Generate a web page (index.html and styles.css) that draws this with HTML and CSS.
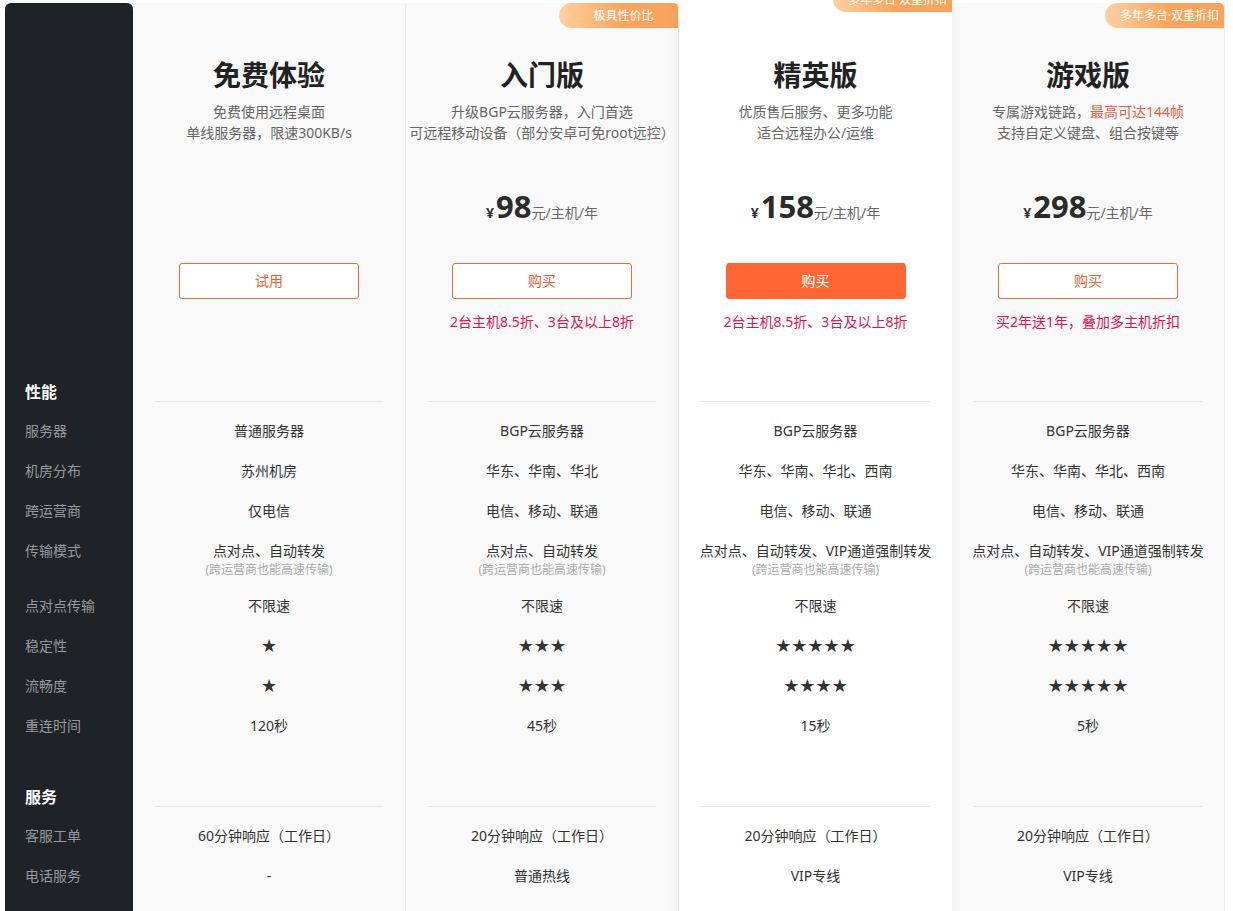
FILE: index.html
```html
<!DOCTYPE html>
<html lang="zh-CN">
<head>
    <meta charset="UTF-8">
    <meta name="viewport" content="width=device-width, initial-scale=1.0">
    <title>远程桌面套餐对比</title>
    <link rel="stylesheet" href="styles.css">
</head>
<body>

<div class="page">
    <!-- left label column -->
    <aside class="side">
        <div class="head"></div>
        <div class="sec">性能</div>
        <ul class="rows">
            <li>服务器</li>
            <li>机房分布</li>
            <li>跨运营商</li>
            <li class="tall">传输模式</li>
            <li>点对点传输</li>
            <li>稳定性</li>
            <li>流畅度</li>
            <li>重连时间</li>
        </ul>
        <div class="sec gap">服务</div>
        <ul class="rows service">
            <li>客服工单</li>
            <li>电话服务</li>
        </ul>
    </aside>

    <div class="plan">
        <div class="head">
            <h2 class="title">免费体验</h2>
            <p class="desc">免费使用远程桌面<br>单线服务器，限速300KB/s</p>
            <div class="price"></div>
            <a class="btn" href="#">试用</a>
        </div>
        <div class="sec"></div>
        <ul class="rows">
            <li>普通服务器</li>
            <li>苏州机房</li>
            <li>仅电信</li>
            <li class="tall">点对点、自动转发<small>(跨运营商也能高速传输)</small></li>
            <li>不限速</li>
            <li class="stars">★</li>
            <li class="stars">★</li>
            <li>120秒</li>
        </ul>
        <div class="sec gap"></div>
        <ul class="rows service">
            <li>60分钟响应（工作日）</li>
            <li>-</li>
        </ul>
    </div>

    <div class="plan">
        <div class="head">
            <span class="badge">极具性价比</span>
            <h2 class="title">入门版</h2>
            <p class="desc">升级BGP云服务器，入门首选<br>可远程移动设备（部分安卓可免root远控）</p>
            <div class="price"><span class="cur">¥</span><b>98</b>元/主机/年</div>
            <a class="btn" href="#">购买</a>
            <p class="note">2台主机8.5折、3台及以上8折</p>
        </div>
        <div class="sec"></div>
        <ul class="rows">
            <li>BGP云服务器</li>
            <li>华东、华南、华北</li>
            <li>电信、移动、联通</li>
            <li class="tall">点对点、自动转发<small>(跨运营商也能高速传输)</small></li>
            <li>不限速</li>
            <li class="stars">★★★</li>
            <li class="stars">★★★</li>
            <li>45秒</li>
        </ul>
        <div class="sec gap"></div>
        <ul class="rows service">
            <li>20分钟响应（工作日）</li>
            <li>普通热线</li>
        </ul>
    </div>

    <div class="plan featured">
        <div class="head">
            <span class="badge">多年多台·双重折扣</span>
            <h2 class="title">精英版</h2>
            <p class="desc">优质售后服务、更多功能<br>适合远程办公/运维</p>
            <div class="price"><span class="cur">¥</span><b>158</b>元/主机/年</div>
            <a class="btn solid" href="#">购买</a>
            <p class="note">2台主机8.5折、3台及以上8折</p>
        </div>
        <div class="sec"></div>
        <ul class="rows">
            <li>BGP云服务器</li>
            <li>华东、华南、华北、西南</li>
            <li>电信、移动、联通</li>
            <li class="tall">点对点、自动转发、VIP通道强制转发<small>(跨运营商也能高速传输)</small></li>
            <li>不限速</li>
            <li class="stars">★★★★★</li>
            <li class="stars">★★★★</li>
            <li>15秒</li>
        </ul>
        <div class="sec gap"></div>
        <ul class="rows service">
            <li>20分钟响应（工作日）</li>
            <li>VIP专线</li>
        </ul>
    </div>

    <div class="plan">
        <div class="head">
            <span class="badge">多年多台·双重折扣</span>
            <h2 class="title">游戏版</h2>
            <p class="desc">专属游戏链路，<em>最高可达144帧</em><br>支持自定义键盘、组合按键等</p>
            <div class="price"><span class="cur">¥</span><b>298</b>元/主机/年</div>
            <a class="btn" href="#">购买</a>
            <p class="note">买2年送1年，叠加多主机折扣</p>
        </div>
        <div class="sec"></div>
        <ul class="rows">
            <li>BGP云服务器</li>
            <li>华东、华南、华北、西南</li>
            <li>电信、移动、联通</li>
            <li class="tall">点对点、自动转发、VIP通道强制转发<small>(跨运营商也能高速传输)</small></li>
            <li>不限速</li>
            <li class="stars">★★★★★</li>
            <li class="stars">★★★★★</li>
            <li>5秒</li>
        </ul>
        <div class="sec gap"></div>
        <ul class="rows service">
            <li>20分钟响应（工作日）</li>
            <li>VIP专线</li>
        </ul>
    </div>
</div>

</body>
</html>
```

FILE: styles.css
```css
body {
    margin: 0;
    background-color: #fff;
    font-family: "Noto Sans", "Noto Sans CJK SC", sans-serif;
    font-size: 14px;
    color: #333;
    overflow: hidden;
}
ul {
    list-style: none;
    margin: 0;
    padding: 0;
}
.page {
    display: flex;
    align-items: flex-start;
    padding: 3px 0 0 5px;
}

/* label column */
.side {
    width: 128px;
    flex: none;
    background-color: #1e2327;
    border-radius: 6px 6px 0 0;
    padding-bottom: 60px;
}
.side .sec {
    padding-left: 20px;
    color: #fff;
    font-weight: bold;
    font-size: 16px;
}
.side .rows li {
    padding-left: 20px;
    color: #969a9e;
}

/* shared vertical rhythm */
.head {
    height: 379px;
    box-sizing: border-box;
    position: relative;
}
.sec {
    height: 20px;
    line-height: 20px;
    box-sizing: border-box;
}
.sec.gap {
    margin-top: 41px;
}
.rows {
    padding-top: 9px;
}
.rows li {
    height: 40px;
    line-height: 20px;
    padding: 10px 0;
    box-sizing: border-box;
}
.rows li.tall {
    height: 55px;
}
.rows small {
    display: block;
    margin-top: 1px;
    font-size: 12px;
    line-height: 16px;
    color: #aaa;
}

/* plan columns */
.plan {
    width: 273px;
    flex: none;
    box-sizing: border-box;
    background-color: #f9f9f9;
    border-right: 1px solid #ececec;
    text-align: center;
    padding-bottom: 60px;
}
.plan .head {
    padding-top: 52px;
}
.plan .sec {
    margin-left: 22px;
    margin-right: 22px;
    border-bottom: 1px solid #e6e6e6;
}
.plan.featured {
    background-color: #fff;
    margin-top: -16px;
    position: relative;
    z-index: 1;
    box-shadow: 0 0 12px rgba(0, 0, 0, 0.06);
    border-right: none;
}
.plan.featured .head {
    height: 395px;
    padding-top: 68px;
}
.badge {
    position: absolute;
    top: 0;
    right: 0;
    width: 119px;
    height: 25px;
    box-sizing: border-box;
    line-height: 25px;
    padding-left: 10px;
    text-align: center;
    white-space: nowrap;
    font-size: 12px;
    color: #fff;
    background: linear-gradient(90deg, #fdd0a0, #f9a45c 55%);
    border-radius: 22px 8px 0 22px;
}
.title {
    margin: 0;
    font-size: 28px;
    line-height: 40px;
    font-weight: bold;
    color: #222;
}
.desc {
    margin: 6px 0 0;
    height: 42px;
    line-height: 21px;
    color: #666;
    white-space: nowrap;
}
.desc em {
    font-style: normal;
    color: #f45a3c;
}
.price {
    height: 88px;
    padding-top: 43px;
    box-sizing: border-box;
    line-height: 40px;
    color: #666;
}
.price .cur {
    font-weight: bold;
    color: #333;
    margin-right: 2px;
}
.price b {
    font-size: 31px;
    color: #2b2b2b;
}
.btn {
    display: block;
    width: 180px;
    height: 36px;
    line-height: 34px;
    margin: 32px auto 0;
    box-sizing: border-box;
    border: 1px solid #ee6a3c;
    border-radius: 3px;
    color: #f0602c;
    text-decoration: none;
    background-color: #fff;
}
.btn.solid {
    background-color: #ff6633;
    border-color: #ff6633;
    color: #fff;
}
.note {
    margin: 12px 0 0;
    line-height: 21px;
    color: #e5124f;
}
.stars {
    font-family: "DejaVu Sans", sans-serif;
    font-size: 18px;
    color: #333;
}
```
